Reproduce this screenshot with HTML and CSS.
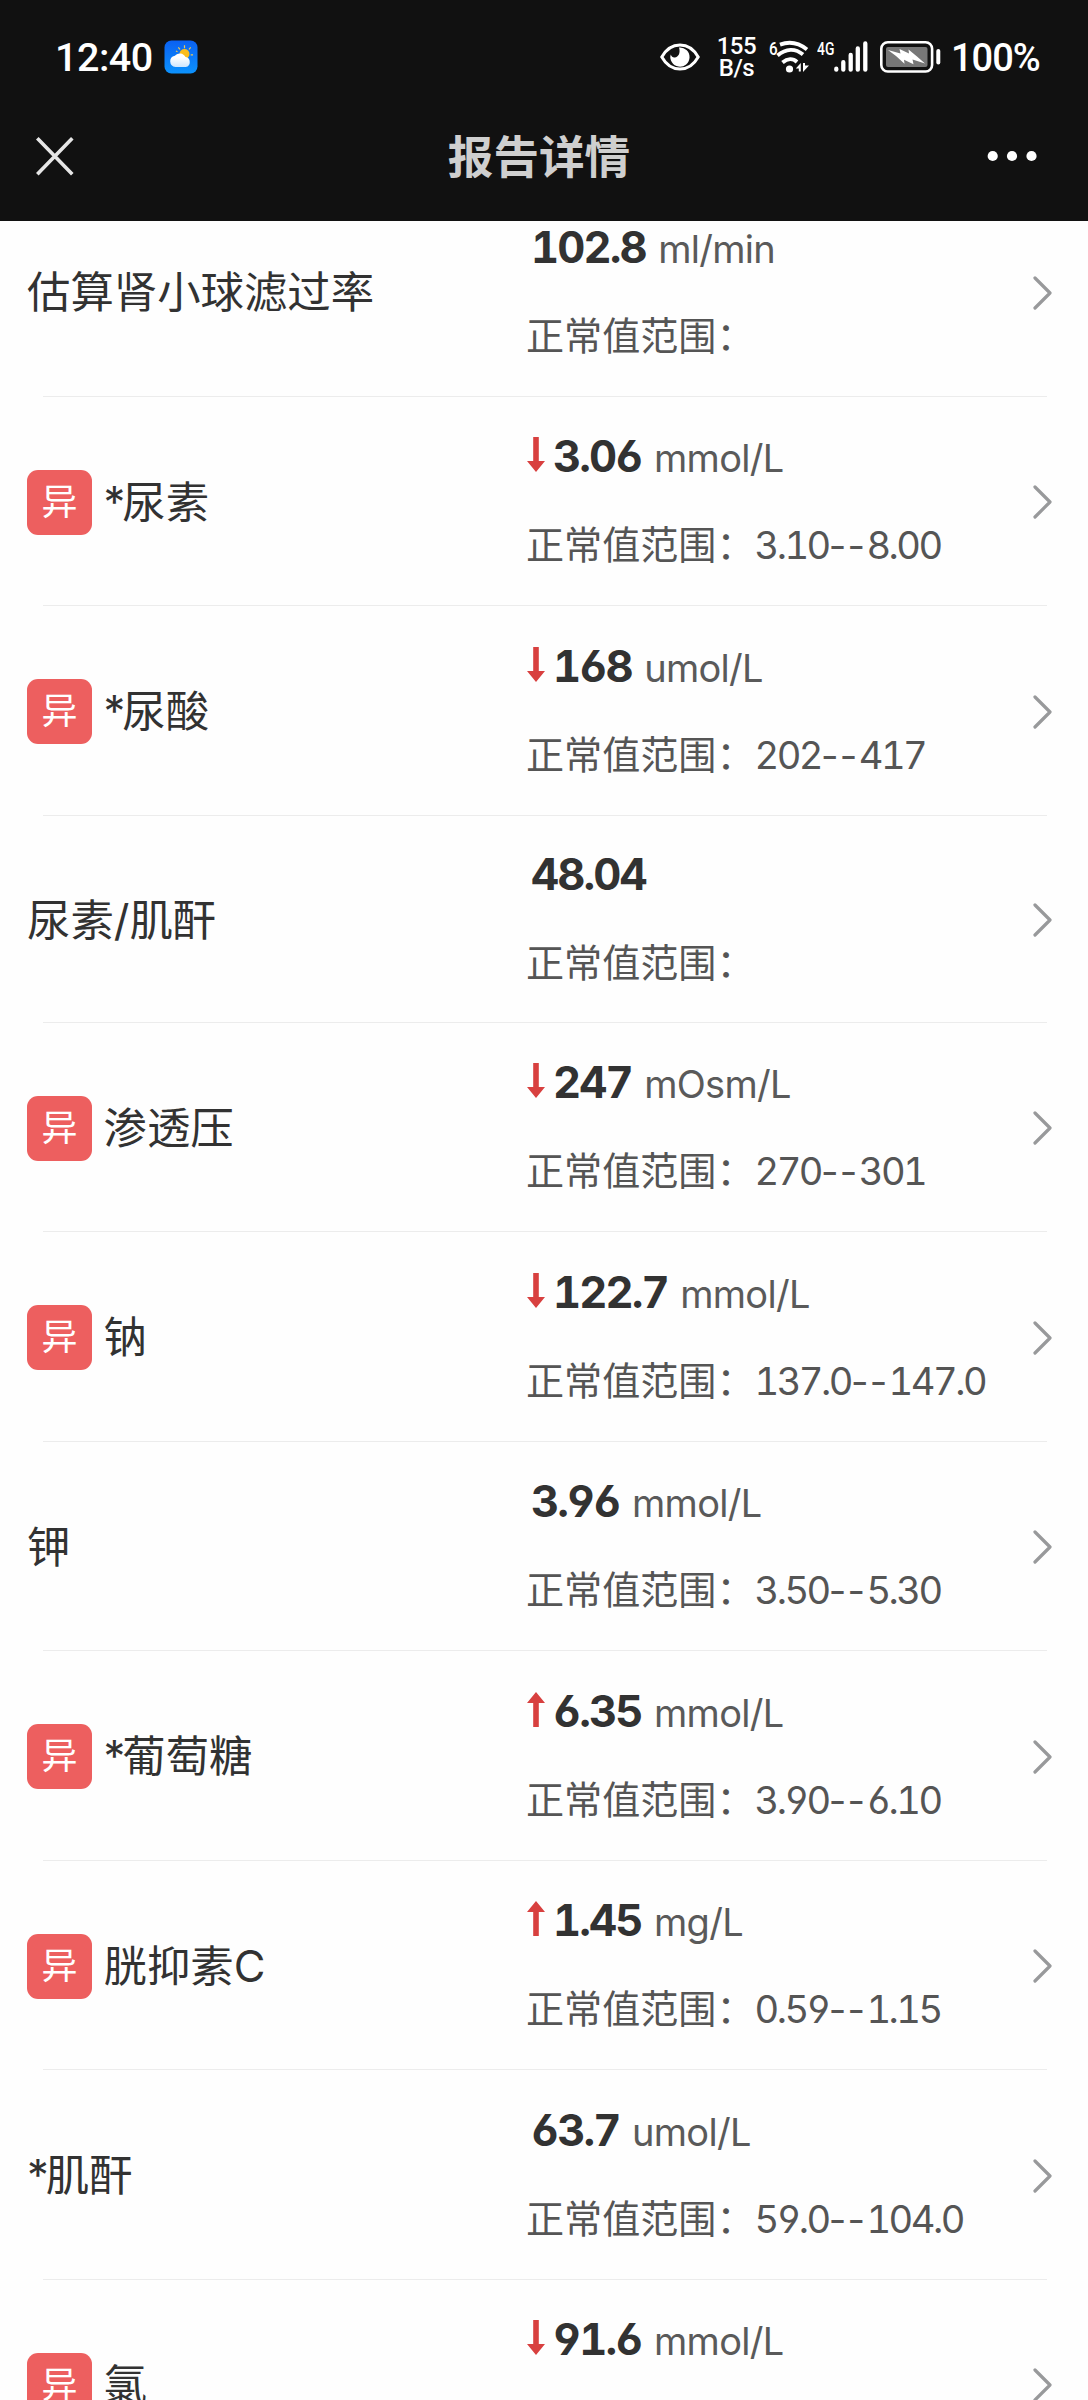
FILE: index.html
```html
<!DOCTYPE html>
<html lang="zh-CN">
<head>
<meta charset="utf-8">
<title>报告详情</title>
<link rel="stylesheet" href="styles.css">
</head>
<body>
<svg class="sprite" aria-hidden="true">
  <symbol id="down" viewBox="0 0 18 35"><path d="M6.2 0h5.6v24H18L9 35 0 24h6.2z"/></symbol>
  <symbol id="up" viewBox="0 0 18 35"><path d="M6.2 35h5.6V11H18L9 0 0 11h6.2z"/></symbol>
  <symbol id="chev" viewBox="0 0 19 34"><path d="M2 2l15 15L2 32" fill="none" stroke="#98999b" stroke-width="3.2" stroke-linecap="round" stroke-linejoin="round"/></symbol>
</svg>

<header class="header">
  <div class="status">
    <span class="clock">12:40</span>
    <svg class="weather" width="34" height="34" viewBox="0 0 34 34">
      <defs>
        <linearGradient id="sky" x2="0" y2="1"><stop offset="0" stop-color="#0a61f2"/><stop offset="1" stop-color="#0c92fd"/></linearGradient>
        <linearGradient id="cloud" x2="0" y2="1"><stop offset=".3" stop-color="#fff"/><stop offset="1" stop-color="#cfe6fd"/></linearGradient>
      </defs>
      <rect width="33" height="33" x=".5" y=".5" rx="7" fill="url(#sky)"/>
      <path d="M20.500 5.200v3M14.300 7.300l1.700 2M26.700 7.300l-1.700 2M29 14.800h-2.300M12 11l1.500.8" stroke="#e9c95a" stroke-width="1.200"/>
      <circle cx="20.500" cy="14" r="5" fill="#fbbd1d"/>
      <path d="M11.500 27a5.700 5.700 0 0 1-.6-11.300 6.500 6.500 0 0 1 10.600 1.300 5.100 5.100 0 0 1 .3 10z" fill="url(#cloud)"/>
    </svg>
    <svg class="eye" width="40" height="28" viewBox="0 0 40 28">
      <path d="M1.800 14C6 6.500 12 2 20 2s14 4.500 18.200 12C34 21.500 28 26 20 26S6 21.500 1.800 14z" fill="none" stroke="#fff" stroke-width="3"/>
      <path d="M19 4.500a9.600 9.600 0 1 1-8.300 7c.8 2.200 2.200 3.200 4 3 3.800-.4 6-4.500 4.300-10z" fill="#fff"/>
    </svg>
    <span class="speed"><span>155</span><span>B/s</span></span>
    <span class="small six">6</span>
    <svg class="wifi" width="34" height="34" viewBox="0 0 34 34">
      <g fill="none" stroke="#fff" stroke-width="3.800">
        <path d="M4 4.600C13 1.200 23 3 31 9.500"/>
        <path d="M1.500 15.500c8.500-7.400 18-7.400 25.500-1"/>
        <path d="M6.500 22.500c5-4.300 10.500-4.300 14.500-.5"/>
      </g>
      <circle cx="13.500" cy="29" r="3.600" fill="#fff"/>
      <path d="M24.800 23v8.500h-2v-3h-3zM27 32v-9l2 0v2.500h4z" fill="#fff"/>
    </svg>
    <span class="small fourg">4G</span>
    <svg class="signal" width="35" height="34" viewBox="0 0 35 34">
      <path d="M3.300 29.700v-1M10.300 29.700v-7.500M17.700 29.700V15M24.800 29.700V8.500M32.300 29.700V3.500" stroke="#fff" stroke-width="4.300" stroke-linecap="round"/>
    </svg>
    <svg class="battery" width="62" height="32" viewBox="0 0 62 32">
      <rect x="1.300" y="1.300" width="50.800" height="29.200" rx="6.500" fill="none" stroke="#fff" stroke-width="2.600"/>
      <rect x="6" y="6" width="41.500" height="20" rx="2" fill="#777"/>
      <path d="M8 9l12.500 3.500L19.500 8l9.500 4.500-.5-4 8.500 7L45 22.500 32.500 18.500l1 4.800-9.500-4.500.5 4-8.500-7.800z" fill="#fff"/>
      <path d="M58.300 10v11.500" stroke="#fff" stroke-width="4" stroke-linecap="round"/>
    </svg>
    <span class="percent">100%</span>
  </div>
  <div class="nav">
    <svg class="close" width="40" height="40" viewBox="0 0 40 40"><path d="M2.300 2.300l35 36M37.300 2.300l-35 36" stroke="#e6e6e6" stroke-width="3.600"/></svg>
    <h1 class="title">报告详情</h1>
    <svg class="more" width="50" height="12" viewBox="0 0 50 12" fill="#fff"><circle cx="5.700" cy="6" r="5.100"/><circle cx="25" cy="6" r="5.100"/><circle cx="44.500" cy="6" r="5.100"/></svg>
  </div>
</header>

<main class="list">
  <section class="row">
    <div class="name">估算肾小球滤过率</div>
    <div class="result"><div class="value"><b class="plain">102.8</b><span>ml/min</span></div><div class="range">正常值范围：</div></div>
    <svg class="chev"><use href="#chev"/></svg>
  </section>
  <section class="row">
    <div class="name"><i class="badge">异</i><span class="starred">尿素</span></div>
    <div class="result"><div class="value"><svg class="arrow"><use href="#down"/></svg><b>3.06</b><span>mmol/L</span></div><div class="range">正常值范围：<em>3.10<span class="dash">--</span>8.00</em></div></div>
    <svg class="chev"><use href="#chev"/></svg>
  </section>
  <section class="row">
    <div class="name"><i class="badge">异</i><span class="starred">尿酸</span></div>
    <div class="result"><div class="value"><svg class="arrow"><use href="#down"/></svg><b>168</b><span>umol/L</span></div><div class="range">正常值范围：<em>202<span class="dash">--</span>417</em></div></div>
    <svg class="chev"><use href="#chev"/></svg>
  </section>
  <section class="row unitless">
    <div class="name">尿素/肌酐</div>
    <div class="result"><div class="value"><b class="plain">48.04</b></div><div class="range">正常值范围：</div></div>
    <svg class="chev"><use href="#chev"/></svg>
  </section>
  <section class="row">
    <div class="name"><i class="badge">异</i>渗透压</div>
    <div class="result"><div class="value"><svg class="arrow"><use href="#down"/></svg><b>247</b><span>mOsm/L</span></div><div class="range">正常值范围：<em>270<span class="dash">--</span>301</em></div></div>
    <svg class="chev"><use href="#chev"/></svg>
  </section>
  <section class="row">
    <div class="name"><i class="badge">异</i>钠</div>
    <div class="result"><div class="value"><svg class="arrow"><use href="#down"/></svg><b>122.7</b><span>mmol/L</span></div><div class="range">正常值范围：<em>137.0<span class="dash">--</span>147.0</em></div></div>
    <svg class="chev"><use href="#chev"/></svg>
  </section>
  <section class="row">
    <div class="name">钾</div>
    <div class="result"><div class="value"><b class="plain">3.96</b><span>mmol/L</span></div><div class="range">正常值范围：<em>3.50<span class="dash">--</span>5.30</em></div></div>
    <svg class="chev"><use href="#chev"/></svg>
  </section>
  <section class="row">
    <div class="name"><i class="badge">异</i><span class="starred">葡萄糖</span></div>
    <div class="result"><div class="value"><svg class="arrow"><use href="#up"/></svg><b>6.35</b><span>mmol/L</span></div><div class="range">正常值范围：<em>3.90<span class="dash">--</span>6.10</em></div></div>
    <svg class="chev"><use href="#chev"/></svg>
  </section>
  <section class="row">
    <div class="name"><i class="badge">异</i>胱抑素C</div>
    <div class="result"><div class="value"><svg class="arrow"><use href="#up"/></svg><b>1.45</b><span>mg/L</span></div><div class="range">正常值范围：<em>0.59<span class="dash">--</span>1.15</em></div></div>
    <svg class="chev"><use href="#chev"/></svg>
  </section>
  <section class="row">
    <div class="name"><span class="starred">肌酐</span></div>
    <div class="result"><div class="value"><b class="plain">63.7</b><span>umol/L</span></div><div class="range">正常值范围：<em>59.0<span class="dash">--</span>104.0</em></div></div>
    <svg class="chev"><use href="#chev"/></svg>
  </section>
  <section class="row">
    <div class="name"><i class="badge">异</i>氯</div>
    <div class="result"><div class="value"><svg class="arrow"><use href="#down"/></svg><b>91.6</b><span>mmol/L</span></div><div class="range">正常值范围：</div></div>
    <svg class="chev"><use href="#chev"/></svg>
  </section>
</main>
</body>
</html>
```
FILE: styles.css
```css
* { box-sizing: border-box; }
body {
  margin: 0;
  width: 1088px;
  height: 2400px;
  overflow: hidden;
  background: #fefefe;
  color: #323232;
  font-family: Inter, "Noto Sans CJK SC", sans-serif;
}
.sprite { display: none; }
svg { display: block; flex: none; }

.header {
  position: relative;
  z-index: 1;
  height: 221px;
  background: #111;
  color: #fff;
}
.status {
  display: flex;
  align-items: center;
  height: 114px;
  padding-left: 55px;
  font-family: Roboto, sans-serif;
  font-weight: 500;
  white-space: nowrap;
}
.clock { width: 109px; font-size: 39.500px; letter-spacing: -0.500px; line-height: 114px; padding-top: 2px; }
.eye { margin-left: 461.500px; }
.speed {
  display: flex;
  flex-direction: column;
  width: 40px;
  margin-left: 17px;
  font-size: 24px;
  line-height: 22px;
  text-align: center;
  letter-spacing: -0.400px;
}
.small { font-size: 19px; line-height: 20px; align-self: flex-start; margin-top: 39px; transform-origin: left; }
.six { width: 8px; margin-left: 12px; transform: scaleX(.8); }
.wifi { margin-left: -1px; }
.fourg { width: 18px; margin-left: 7px; transform: scaleX(.73); }
.signal { margin-left: -2px; }
.battery { margin-left: 12px; }
.percent { margin-left: 9.500px; font-size: 38px; letter-spacing: -1px; padding-top: 1px; }

.nav {
  display: grid;
  grid-template-columns: 200px 1fr 200px;
  align-items: center;
  height: 84px;
  padding: 0 51px 0 35px;
}
.title {
  margin: 0;
  padding: 3px 0 0 6px;
  text-align: center;
  color: #cfcfcf;
  font-size: 45.600px;
  line-height: 60px;
  font-weight: 700;
}
.more { justify-self: end; }

.list { margin-top: -34px; }
.row {
  position: relative;
  display: grid;
  grid-template-columns: 499px 1fr 19px;
  align-items: center;
  height: 209.500px;
  padding: 2px 36px 0 27px;
}
.row::after {
  content: "";
  position: absolute;
  left: 43px;
  right: 41px;
  bottom: 0;
  height: 1px;
  background: #ececec;
}
.unitless { height: 207px; }
.name {
  display: flex;
  align-items: center;
  gap: 11.500px;
  font-size: 43.400px;
  line-height: 65px;
  white-space: nowrap;
}
.starred::before { content: "*"; margin-right: -3px; }
.badge {
  width: 65px;
  height: 65px;
  border-radius: 11px;
  background: #ed5f5f;
  color: #fff;
  font-size: 36px;
  font-style: normal;
  text-align: center;
}
.value { display: flex; align-items: baseline; height: 60px; margin-top: -3px; line-height: 60px; }
.value b {
  margin-left: 8px;
  font-size: 43.500px;
  font-weight: 700;
  letter-spacing: -1.900px;
  font-feature-settings: "tnum", "cv03", "cv04";
}
.value .plain { margin-left: 5px; }
.value span { margin-left: 12.500px; font-size: 38px; letter-spacing: -0.700px; color: #5a5a5a; }
.arrow { width: 18px; height: 35px; margin-left: 1px; fill: #d8403f; }
.range { margin-top: 29px; height: 60px; line-height: 60px; font-size: 38.080px; color: #555; white-space: nowrap; }
.range em { font-style: normal; letter-spacing: -2.500px; font-feature-settings: "tnum", "cv03", "cv04"; }
.range .dash { letter-spacing: 1.300px; font-feature-settings: "tnum" 0; }
.chev { width: 19px; height: 34px; }
```
